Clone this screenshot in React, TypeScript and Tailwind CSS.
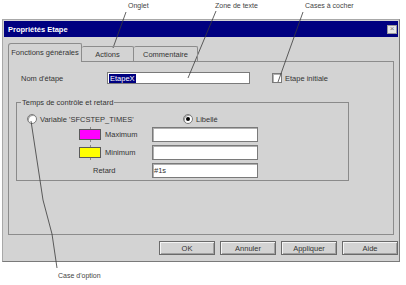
import React from 'react';

const font = { fontFamily: '"Liberation Sans", Arial, sans-serif' };

const Radio = ({ checked }: { checked?: boolean }) => (
  <span className="flex h-[10px] w-[10px] shrink-0 items-center justify-center rounded-full border border-[#7a7a7a] bg-white shadow-[inset_1px_1px_#a0a0a0]">
    {checked && <span className="h-[4px] w-[4px] rounded-full bg-black" />}
  </span>
);

const Swatch = ({ color }: { color: string }) => (
  <span className={`relative block h-[11px] w-[22px] shrink-0 border border-[#5a5a5a] ${color}`}>
    <span className="absolute left-[10px] top-[-3px] h-[2px] w-px bg-[#888]" />
    <span className="absolute bottom-[-3px] left-[10px] h-[2px] w-px bg-[#888]" />
  </span>
);

const Field = ({ value }: { value?: string }) => (
  <div className="flex h-[15px] w-[106px] items-center border border-[#7a7a7a] bg-white pl-[1px] shadow-[inset_1px_1px_#b0b0b0]">
    {value}
  </div>
);

const Button = ({ label }: { label: string }) => (
  <button className="flex h-[14px] w-[56px] items-center justify-center border border-[#6a6a6a] bg-[#d3d3d3] text-[#333] shadow-[inset_1px_1px_#f4f4f4,inset_-1px_-1px_#a0a0a0]">
    {label}
  </button>
);

export default function App() {
  return (
    <div
      className="relative h-[285px] w-[406px] overflow-hidden bg-white text-[7.5px] leading-[9px] text-[#333]"
      style={font}
    >
      {/* annotations top */}
      <div className="flex h-[19px] items-start pl-[128px] pt-[1px] text-[7px] text-[#444]">
        <span className="w-[87px]">Onglet</span>
        <span className="w-[90px]">Zone de texte</span>
        <span>Cases à cocher</span>
      </div>

      {/* dialog */}
      <div className="ml-[2px] flex h-[243px] w-[398px] flex-col border border-[#a8a8a8] border-b-[#7a7a7a] border-r-[#7a7a7a] bg-[#d3d3d3] p-[1px]">
        <div className="flex h-[16px] items-center justify-between bg-[#000080] pl-[4px] pr-[1px]">
          <span className="font-bold text-white">Propriétés Etape</span>
          <span className="flex h-[9px] w-[10px] items-center justify-center border border-[#9a9a9a] bg-[#e6e6e6] text-[8px] leading-none text-[#777]">
            ×
          </span>
        </div>

        {/* tabs */}
        <div className="relative z-10 mt-[6px] flex h-[18px] items-end pl-[4px]">
          <div className="-mb-px flex h-[19px] w-[74px] items-center justify-center rounded-tl-[3px] rounded-tr-[2px] border border-b-0 border-[#8c8c8c] bg-[#d3d3d3] pb-[2px]">
            Fonctions générales
          </div>
          <div className="flex h-[15px] w-[52px] items-center justify-center rounded-t-[2px] border border-b-0 border-l-0 border-[#8c8c8c]">
            Actions
          </div>
          <div className="flex h-[15px] w-[64px] items-center justify-center rounded-t-[2px] border border-b-0 border-l-0 border-[#8c8c8c]">
            Commentaire
          </div>
        </div>

        {/* panel */}
        <div className="ml-[4px] flex h-[174px] w-[386px] flex-col border border-[#8c8c8c] pt-[10px]">
          <div className="flex h-[12px] items-center pl-[12px]">
            <span className="w-[86px]">Nom d'étape</span>
            <div className="flex h-[12px] w-[143px] items-center border border-[#7a7a7a] bg-white pl-[1px]">
              <span className="bg-[#000080] px-[1px] text-white">EtapeX</span>
            </div>
            <span className="ml-[22px] h-[10px] w-[10px] border border-[#7a7a7a] bg-white shadow-[inset_1px_1px_#b0b0b0]" />
            <span className="ml-[3px]">Etape initiale</span>
          </div>

          <fieldset className="ml-[7px] mt-[14px] h-[83px] w-[333px] border border-[#8a8a8a] px-[4px]">
            <legend className="px-[1px]">Temps de contrôle et retard</legend>
            <div className="mt-[7px] flex h-[10px] items-center">
              <div className="ml-[6px] flex w-[156px] items-center">
                <Radio />
                <span className="ml-[3px]">Variable 'SFCSTEP_TIMES'</span>
              </div>
              <Radio checked />
              <span className="ml-[3px]">Libellé</span>
            </div>
            <div className="mt-[3px] flex h-[15px] items-center">
              <span className="ml-[58px]">
                <Swatch color="bg-[#ff00ff]" />
              </span>
              <span className="ml-[4px] w-[47px]">Maximum</span>
              <Field />
            </div>
            <div className="mt-[3px] flex h-[15px] items-center">
              <span className="ml-[58px]">
                <Swatch color="bg-[#ffff00]" />
              </span>
              <span className="ml-[4px] w-[47px]">Minimum</span>
              <Field />
            </div>
            <div className="mt-[3px] flex h-[15px] items-center">
              <span className="ml-[72px] w-[59px]">Retard</span>
              <Field value="#1s" />
            </div>
          </fieldset>
        </div>

        {/* buttons */}
        <div className="mt-[6px] flex justify-end gap-[5px]">
          <Button label="OK" />
          <Button label="Annuler" />
          <Button label="Appliquer" />
          <Button label="Aide" />
        </div>
      </div>

      <div className="mt-[9px] pl-[58px] text-[7px] text-[#444]">Case d'option</div>

      {/* leader lines */}
      <svg className="pointer-events-none absolute inset-0" width="406" height="285">
        <g stroke="#3a3a3a" strokeWidth="0.8" fill="none">
          <line x1="126" y1="12" x2="113" y2="48" />
          <line x1="216" y1="11" x2="188" y2="78" />
          <line x1="303" y1="12" x2="278" y2="82" />
          <polyline points="31,121 43,200 52,234 57,268" />
        </g>
      </svg>
    </div>
  );
}
